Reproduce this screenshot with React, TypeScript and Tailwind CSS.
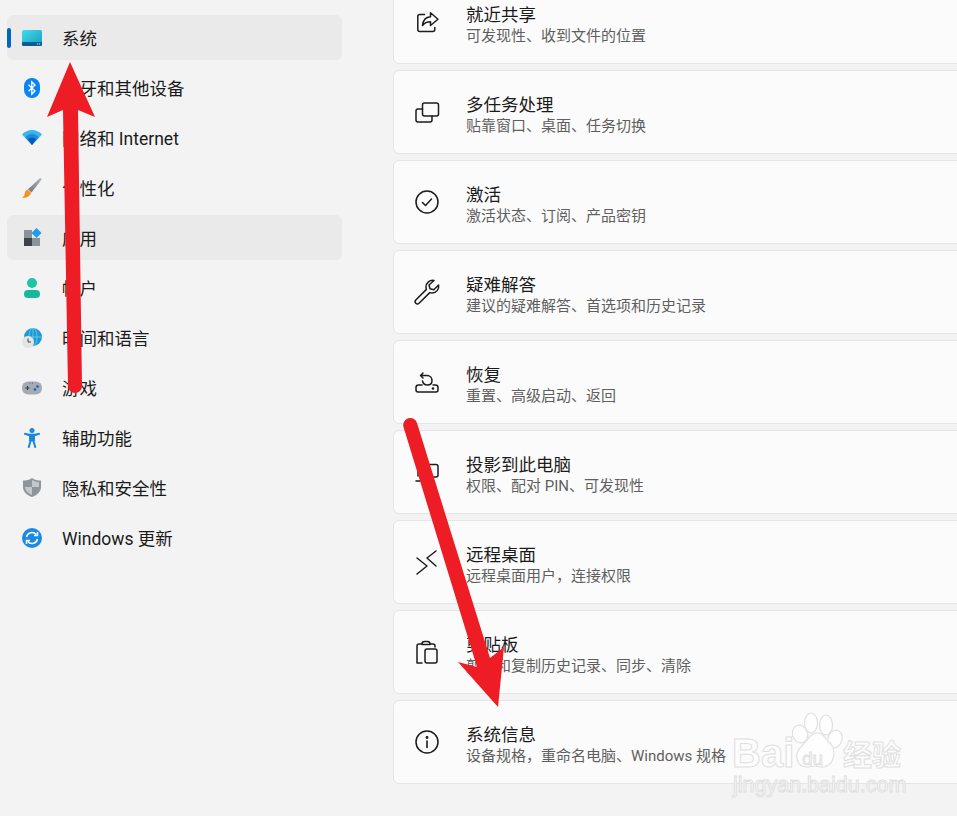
const navItems = [
  { label: "系统", icon: <SystemIcon />, active: true, marker: true },
  { label: "蓝牙和其他设备", icon: <BluetoothIcon /> },
  { label: "网络和 Internet", icon: <WifiIcon /> },
  { label: "个性化", icon: <BrushIcon /> },
  { label: "应用", icon: <AppsIcon />, active: true },
  { label: "帐户", icon: <UserIcon /> },
  { label: "时间和语言", icon: <GlobeIcon /> },
  { label: "游戏", icon: <GameIcon /> },
  { label: "辅助功能", icon: <AccessIcon /> },
  { label: "隐私和安全性", icon: <ShieldIcon /> },
  { label: "Windows 更新", icon: <UpdateIcon /> },
];

const cards = [
  { title: "就近共享", sub: "可发现性、收到文件的位置", icon: <ShareGlyph /> },
  { title: "多任务处理", sub: "贴靠窗口、桌面、任务切换", icon: <MultitaskGlyph /> },
  { title: "激活", sub: "激活状态、订阅、产品密钥", icon: <CheckGlyph /> },
  { title: "疑难解答", sub: "建议的疑难解答、首选项和历史记录", icon: <WrenchGlyph /> },
  { title: "恢复", sub: "重置、高级启动、返回", icon: <RecoveryGlyph /> },
  { title: "投影到此电脑", sub: "权限、配对 PIN、可发现性", icon: <ProjectGlyph /> },
  { title: "远程桌面", sub: "远程桌面用户，连接权限", icon: <RemoteGlyph /> },
  { title: "剪贴板", sub: "剪切和复制历史记录、同步、清除", icon: <ClipboardGlyph /> },
  { title: "系统信息", sub: "设备规格，重命名电脑、Windows 规格", icon: <InfoGlyph /> },
];

function SystemIcon() {
  return (
    <svg width="20" height="16" viewBox="0 0 20 16">
      <defs>
        <linearGradient id="sys" x1="0" y1="0" x2="1" y2="1">
          <stop offset="0" stopColor="#3fdcec" />
          <stop offset="1" stopColor="#1a9cc4" />
        </linearGradient>
      </defs>
      <rect width="20" height="16" rx="1.5" fill="url(#sys)" />
      <path d="M0 12h20v2.500a1.500 1.500 0 0 1-1.500 1.500h-17A1.500 1.500 0 0 1 0 14.500z" fill="#0f5d8c" />
      <path d="M15 13.500h1.200v1H15zM17 13.500h1.200v1H17z" fill="#cfe8f2" />
    </svg>
  );
}

function BluetoothIcon() {
  return (
    <svg width="16" height="20" viewBox="0 0 16 20">
      <rect width="16" height="20" rx="8" fill="#0a84f0" />
      <path d="M4.500 6.800 11 13l-3.200 3.200V3.800L11 7l-6.500 6.200" fill="none" stroke="#fff" strokeWidth="1.300" />
    </svg>
  );
}

function WifiIcon() {
  return (
    <svg width="20" height="15" viewBox="0 0 20 15">
      <path d="M0 4.500C5.500-1.500 14.500-1.500 20 4.500L10 15z" fill="#3cb4f2" />
      <path d="M3.300 7.500C7 2.500 13 2.500 16.700 7.500L10 15z" fill="#1c8ee0" />
      <path d="M5.800 9.500c2.400-2.600 6-2.600 8.400 0L10 15z" fill="#0b5cb0" />
    </svg>
  );
}

function BrushIcon() {
  return (
    <svg width="20" height="20" viewBox="0 0 20 20">
      <defs>
        <linearGradient id="brush" x1="0" y1="1" x2="1" y2="0">
          <stop offset="0" stopColor="#6f747b" />
          <stop offset="1" stopColor="#b4b8bd" />
        </linearGradient>
      </defs>
      <path d="M17.500.500c1.200-.8 2.400.3 1.800 1.500L9.500 14.500 6 11.300z" fill="url(#brush)" />
      <path d="M5.500 11.500 9 14.700C8 18.500 4 20.300 0 19.500c2-1 2.500-2.500 2.800-4.500.3-1.800 1.300-3 2.700-3.500z" fill="#f39323" />
    </svg>
  );
}

function AppsIcon() {
  return (
    <svg width="20" height="20" viewBox="0 0 20 20">
      <rect x="2" y="2" width="8" height="8" fill="#8d9199" />
      <rect x="2" y="10" width="8" height="8" fill="#3f4247" />
      <rect x="10" y="10" width="8" height="8" fill="#8d9199" />
      <path d="M14.500 0 19.500 5l-5 5-5-5z" fill="#1e9cf0" />
    </svg>
  );
}

function UserIcon() {
  return (
    <svg width="16" height="20" viewBox="0 0 16 20">
      <circle cx="8" cy="5" r="5" fill="#1fc4a8" />
      <rect y="12" width="16" height="8" rx="4" fill="#17b79c" />
    </svg>
  );
}

function GlobeIcon() {
  return (
    <svg width="20" height="20" viewBox="0 0 20 20">
      <circle cx="11" cy="9" r="9" fill="#1b9ad6" />
      <path d="M11 0v18M2 9h18" stroke="#6fd0ef" strokeWidth=".8" />
      <ellipse cx="11" cy="9" rx="4" ry="9" fill="none" stroke="#6fd0ef" strokeWidth=".8" />
      <circle cx="6" cy="14" r="6" fill="#e4e4e4" />
      <path d="M6 10.500V14h3" fill="none" stroke="#444" strokeWidth="1" />
    </svg>
  );
}

function GameIcon() {
  return (
    <svg width="20" height="14" viewBox="0 0 20 14">
      <rect width="20" height="13" y=".5" rx="6" fill="#a6abb3" />
      <path d="M3.500 7h4M5.500 5v4" stroke="#33373c" strokeWidth="1" />
      <circle cx="13" cy="8.500" r="1.300" fill="#0b63c4" />
      <circle cx="15.500" cy="5.500" r="1.300" fill="#0b63c4" />
      <circle cx="8" cy="2" r=".5" fill="#444" />
      <circle cx="10.500" cy="2" r=".5" fill="#444" />
    </svg>
  );
}

function AccessIcon() {
  return (
    <svg width="16" height="20" viewBox="0 0 16 20">
      <circle cx="8" cy="2.500" r="2.500" fill="#1a86e0" />
      <path d="M1 5.800 8 8l7-2.200M8 8l-3.200 11M8 8l3.200 11M6 8.500h4v4H6z" fill="#1a86e0" stroke="#1a86e0" strokeWidth="2" strokeLinecap="round" strokeLinejoin="round" />
    </svg>
  );
}

function ShieldIcon() {
  return (
    <svg width="18" height="19" viewBox="0 0 18 19">
      <path d="M9 0c2.500 1.800 5.500 2.600 9 2.600V9c0 4.500-3.500 8-9 10C3.500 17 0 13.500 0 9V2.600C3.500 2.600 6.500 1.800 9 0z" fill="#8f959c" />
      <path d="M9 2c2 1.300 4.300 2 7 2.200V9H9zM9 9H2c.3 3.700 3 6.300 7 8z" fill="#c4c8cc" />
    </svg>
  );
}

function UpdateIcon() {
  return (
    <svg width="20" height="20" viewBox="0 0 20 20">
      <circle cx="10" cy="10" r="10" fill="#1a8ae5" />
      <path d="M4.500 9a5.600 5.600 0 0 1 9.800-2.500M15.500 11a5.600 5.600 0 0 1-9.800 2.500" fill="none" stroke="#fff" strokeWidth="1.500" />
      <path d="M15.500 4v3.500H12M4.500 16v-3.500H8" fill="none" stroke="#fff" strokeWidth="1.500" />
    </svg>
  );
}

// line icons on the cards, all drawn on a 24 box
function Glyph({ children }: { children: React.ReactNode }) {
  return (
    <svg width="24" height="24" viewBox="0 0 24 24" fill="none" stroke="#1c1c1c" strokeWidth="1.500" strokeLinecap="round" strokeLinejoin="round" className="overflow-visible">
      {children}
    </svg>
  );
}

function ShareGlyph() {
  return (
    <Glyph>
      <path d="M9.500 4.500H4.800A2 2 0 0 0 2.800 6.500v13a2 2 0 0 0 2 2h13a2 2 0 0 0 2-2v-2" />
      <path d="M15.500 2.800 23 9.200l-7.500 6.300v-3.700c-3.500 0-6 1-8 3.700.5-5 3-8.500 8-8.800z" />
    </Glyph>
  );
}

function MultitaskGlyph() {
  return (
    <Glyph>
      <rect x="7.500" y="3" width="16" height="13" rx="2" />
      <path d="M7.500 9H3a2 2 0 0 0-2 2v9a2 2 0 0 0 2 2h12a2 2 0 0 0 2-2v-4" />
    </Glyph>
  );
}

function CheckGlyph() {
  return (
    <Glyph>
      <circle cx="12" cy="12" r="11" />
      <path d="m7.500 12.500 3 3 6-6.500" />
    </Glyph>
  );
}

function WrenchGlyph() {
  return (
    <Glyph>
      <path d="M19 .5c-4.300-.8-8 2.300-8 6.500 0 1 .2 1.700.4 2.400L.8 20a2.300 2.300 0 0 0 3.200 3.300l10.800-10.700c.8.300 1.500.4 2.300.4 4.200 0 7.300-3.700 6.500-8l-4.800 4.800-3.800-1-1-3.800z" />
    </Glyph>
  );
}

function RecoveryGlyph() {
  return (
    <Glyph>
      <path d="M8 3 5.500 5.500 8 8M6 5.500h6c3 0 5 2.200 5 5s-2 4.500-4.500 4.500S8 13.500 7.500 11" />
      <path d="M7 15H3.500A2.500 2.500 0 0 0 1 17.500V20a2 2 0 0 0 2 2h18a2 2 0 0 0 2-2v-2.500a2.500 2.500 0 0 0-2.500-2.500H18" />
      <circle cx="18" cy="18.500" r=".6" fill="#1c1c1c" />
    </Glyph>
  );
}

function ProjectGlyph() {
  return (
    <Glyph>
      <path d="M3 16V6.500a2 2 0 0 1 2-2h16a2 2 0 0 1 2 2V15a2 2 0 0 1-2 2H10M1 21h10" />
    </Glyph>
  );
}

function RemoteGlyph() {
  return (
    <Glyph>
      <path d="m2 8 10 8-10 8M21 1l-9 7 9 8" />
    </Glyph>
  );
}

function ClipboardGlyph() {
  return (
    <Glyph>
      <path d="M7 4H4a2 2 0 0 0-2 2v17h5M7 4c0-1.500.8-2.500 2.500-2.500h3C14.200 1.500 15 2.500 15 4v.5H7zM15 4h3a2 2 0 0 1 2 2v1" />
      <rect x="10" y="9" width="12" height="14" rx="2" />
    </Glyph>
  );
}

function InfoGlyph() {
  return (
    <Glyph>
      <circle cx="12" cy="12" r="11" />
      <path d="M12 11v6.500" strokeWidth="1.600" />
      <circle cx="12" cy="7.500" r=".7" fill="#1c1c1c" />
    </Glyph>
  );
}

function Arrows() {
  return (
    <svg className="absolute inset-0 pointer-events-none" width="957" height="816" viewBox="0 0 957 816">
      <path d="M70 62 95 117 78 110 82 386a7 7 0 0 1-14 0L63 110 47 117z" fill="#ee1c25" />
      <path d="M403.500 427a7 7 0 0 1 13.500-4L490 658 504 647 498 707 458 662 477 667z" fill="#ee1c25" />
    </svg>
  );
}

function Watermark() {
  const outlined = "absolute text-white/70 [-webkit-text-stroke:1px_#e0e0e0] [font-family:'Liberation_Sans',sans-serif]";
  return (
    <div className="absolute left-[725px] top-[705px] w-[190px] h-[95px] pointer-events-none">
      <div className={`${outlined} left-[7px] top-[26px] text-[40px] leading-[44px] font-bold`}>Bai</div>
      <svg className="absolute left-[67px] top-[7px]" width="52" height="58" viewBox="0 0 52 58" fill="rgba(255,255,255,.7)" stroke="#e0e0e0" strokeWidth="1.200">
        <ellipse cx="8" cy="22" rx="7.500" ry="9" transform="rotate(-20 8 22)" />
        <ellipse cx="19" cy="11" rx="6.500" ry="10" />
        <ellipse cx="34" cy="13" rx="6.500" ry="10" />
        <ellipse cx="43" cy="27" rx="7" ry="9" transform="rotate(20 43 27)" />
        <path d="M25 21c7 0 8 6 13 10 6 5 6 22-7 24-3 .5-6-1-8-1-3 0-5 1.500-9 1C4 54 2 42 9 35c5-4 8-14 16-14z" />
      </svg>
      <div className={`${outlined} left-[77px] top-[44px] text-[19px] leading-[20px]`}>du</div>
      <div className="absolute left-[118px] top-[32px] text-[29px] leading-[32px] font-bold text-white/70 [-webkit-text-stroke:1px_#e0e0e0] [font-family:'Noto_Sans_CJK_SC',sans-serif]">经验</div>
      <div className={`${outlined} left-[8px] top-[66px] text-[21.5px] leading-[28px]`}>jingyan.baidu.com</div>
    </div>
  );
}

export default function App() {
  return (
    <div className="relative flex w-[957px] h-[816px] overflow-hidden bg-[#f3f3f3] text-[#1b1b1b] [font-family:Roboto,'Noto_Sans_CJK_SC',sans-serif]">
      <aside className="w-[393px] shrink-0 pl-[7px] pr-[51px] pt-[15px] flex flex-col gap-[5px]">
        {navItems.map((item) => (
          <div
            key={item.label}
            className={`relative flex items-center h-[45px] rounded-md ${item.active ? "bg-[#eaeaea]" : ""}`}
          >
            {item.marker && <span className="absolute left-0 top-[13px] w-[4px] h-[20px] rounded-full bg-[#0067c0]" />}
            <span className="flex items-center justify-center w-[20px] h-[20px] ml-[15px]">{item.icon}</span>
            <span className="ml-[20px] mt-[2px] text-[17.5px] leading-[24px]">{item.label}</span>
          </div>
        ))}
      </aside>

      <main className="flex flex-col gap-[6px] -mt-[20px] w-[700px] shrink-0">
        {cards.map((card) => (
          <div
            key={card.title}
            className="flex items-center h-[84px] shrink-0 pl-[21px] bg-[#fbfbfb] border border-[#e5e5e5] rounded-md"
          >
            <span className="w-[24px] h-[24px] shrink-0">{card.icon}</span>
            <div className="ml-[27px] mt-[8px]">
              <div className="text-[17.5px] leading-[21px]">{card.title}</div>
              <div className="text-[15px] leading-[21px] text-[#5f5f5f]">{card.sub}</div>
            </div>
          </div>
        ))}
      </main>

      <Watermark />
      <Arrows />
    </div>
  );
}
